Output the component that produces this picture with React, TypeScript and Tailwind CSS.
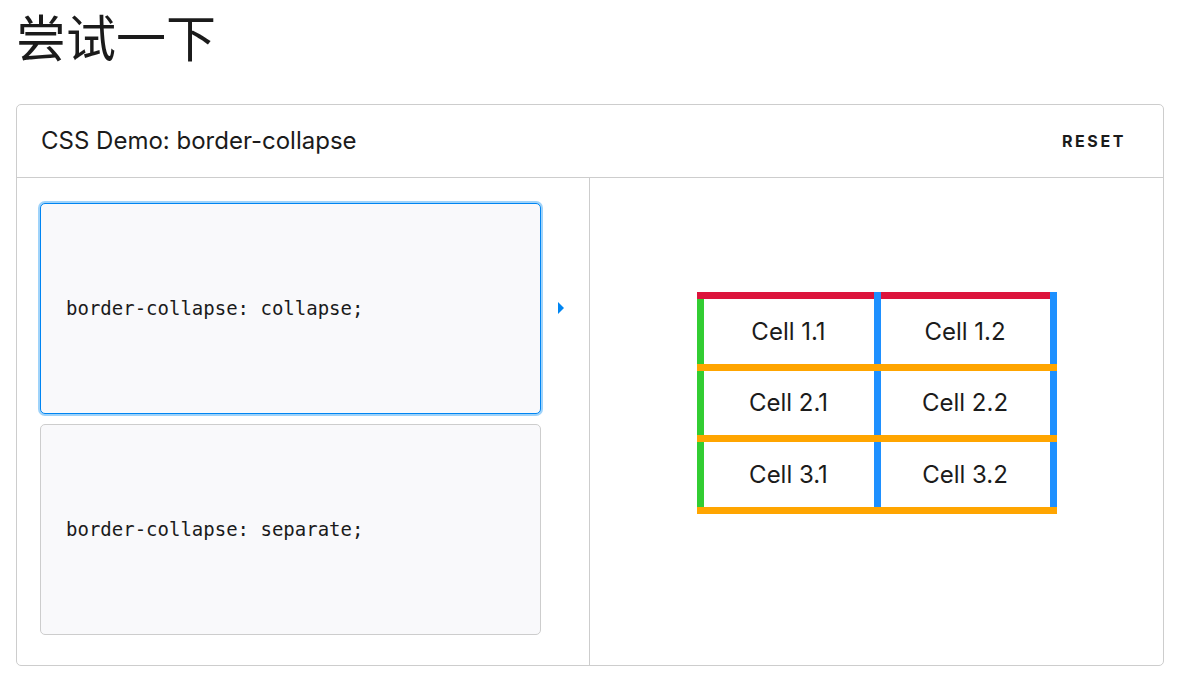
import React from "react";

const options = ["border-collapse: collapse;", "border-collapse: separate;"];

const rows = [
  ["Cell 1.1", "Cell 1.2"],
  ["Cell 2.1", "Cell 2.2"],
  ["Cell 3.1", "Cell 3.2"],
];

function DemoTable() {
  return (
    <div className="flex w-[360px] flex-col">
      {/* top edge: red over the cells, blue where the vertical lines run */}
      <div className="flex h-[7px]">
        <div className="w-[177px] bg-[#dc143c]" />
        <div className="w-[7px] bg-[#1e90ff]" />
        <div className="w-[169px] bg-[#dc143c]" />
        <div className="w-[7px] bg-[#1e90ff]" />
      </div>
      {rows.map((row, i) => (
        <React.Fragment key={i}>
          <div className={`flex ${i === 1 ? "h-[64px]" : "h-[65px]"}`}>
            <div className="w-[7px] bg-[#32cd32]" />
            <div className="flex w-[170px] items-center justify-center">{row[0]}</div>
            <div className="w-[7px] bg-[#1e90ff]" />
            <div className="flex w-[169px] items-center justify-center">{row[1]}</div>
            <div className="w-[7px] bg-[#1e90ff]" />
          </div>
          <div className="h-[7px] bg-[#ffa500]" />
        </React.Fragment>
      ))}
    </div>
  );
}

export default function App() {
  return (
    <div className="min-h-screen bg-white pl-4 pr-5 text-[#1b1b1b] [font-family:Inter,'Noto_Sans_CJK_SC',sans-serif]">
      <h2 className="pt-[5px] text-[50px] font-normal leading-[60px] [font-family:'Noto_Sans_CJK_SC',sans-serif]">
        尝试一下
      </h2>

      <section className="mt-[39px] rounded-[5px] border border-[#cdcdcd]">
        <header className="flex h-[73px] items-center justify-between border-b border-[#cdcdcd] pl-6 pr-[37px]">
          <h4 className="text-[24px] font-normal">CSS Demo: border-collapse</h4>
          <button className="text-[16px] font-bold tracking-[2.6px]">RESET</button>
        </header>

        <div className="grid grid-cols-2">
          <div className="relative border-r border-[#cdcdcd] pb-[30px] pl-[23px] pr-12 pt-[25px]">
            <div className="flex flex-col gap-[10px]">
              {options.map((code, i) => (
                <div
                  key={code}
                  className={`flex h-[211px] items-center rounded-[5px] border bg-[#f9f9fb] pl-[25px] [font-family:'DejaVu_Sans_Mono',monospace] text-[19px] ${
                    i === 0
                      ? "border-[#0085f2] ring-2 ring-[#9fd3fa]"
                      : "border-[#cdcdcd]"
                  }`}
                >
                  {code}
                </div>
              ))}
            </div>
            <div className="absolute left-[541px] top-[124px] h-0 w-0 border-y-[6px] border-l-[6px] border-y-transparent border-l-[#0085f2]" />
          </div>

          <div className="flex items-start justify-center pt-[114px] text-[24px]">
            <DemoTable />
          </div>
        </div>
      </section>
    </div>
  );
}
